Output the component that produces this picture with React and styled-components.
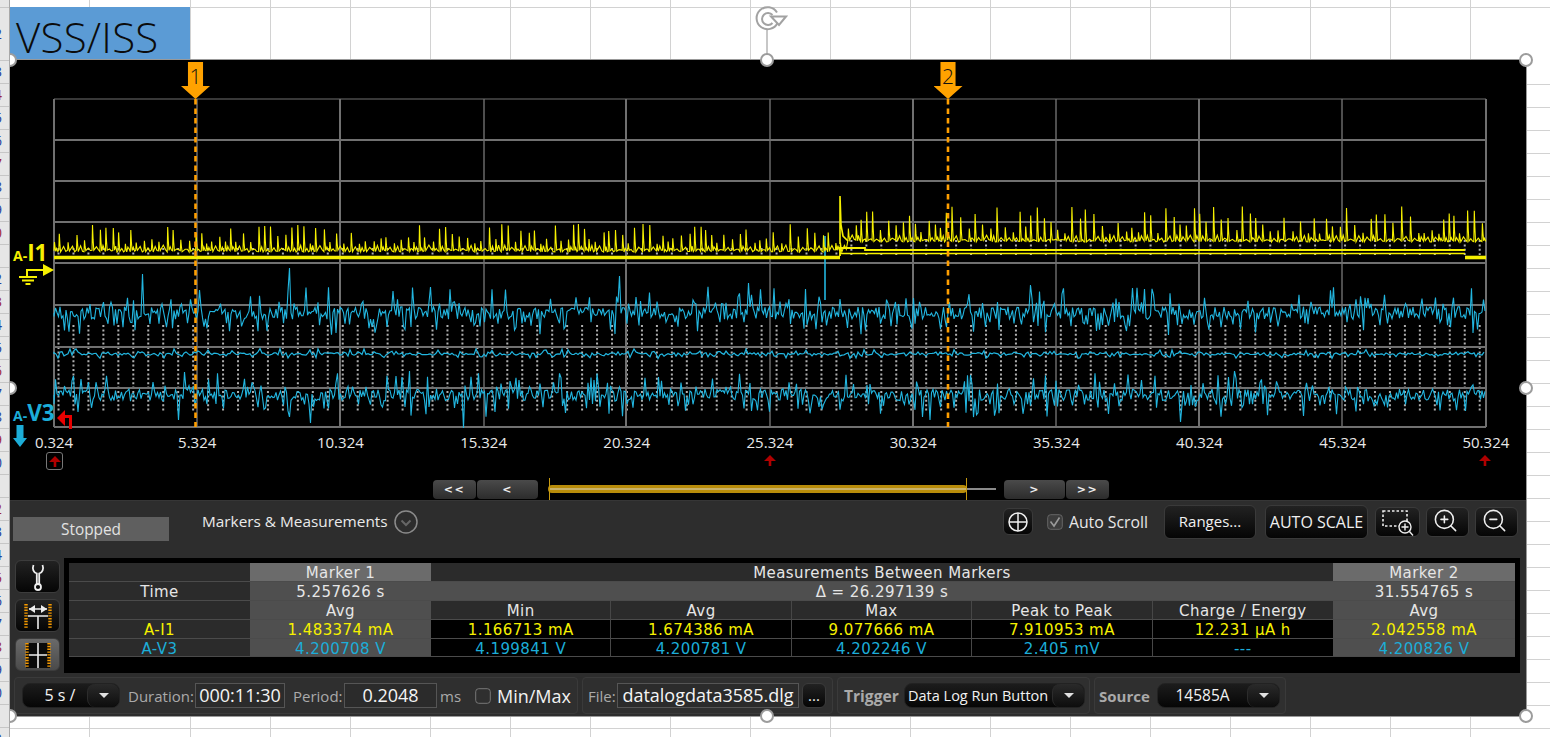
import React, { useMemo } from "react";
import styled, { createGlobalStyle } from "styled-components";
import { ZoomIn, ZoomOut } from "lucide-react";

const Global = createGlobalStyle`
  html, body { margin: 0; padding: 0; background: #fff; overflow: hidden; }
  #root { width: 1550px; height: 737px; overflow: hidden; }
  * { box-sizing: border-box; }
`;

const UI = `"Open Sans", "Noto Sans", sans-serif`;
const WIDE = `"DejaVu Sans", "Open Sans", sans-serif`;
const YEL = "#f6f000";
const BLU = "#1cadd8";
const TRACE_BLU = "#22b6e0";

const Page = styled.div`
  display: flex;
  width: 1550px;
  height: 737px;
  overflow: hidden;
  font-family: ${UI};
`;
const RowHeader = styled.div`
  position: relative;
  z-index: 5;
  flex: 0 0 10px;
  background: #e6e6e6;
  border-right: 1px solid #a8a8a8;
  display: flex;
  flex-direction: column;
  overflow: hidden;
`;
const RowNum = styled.div`
  flex: 0 0 ${(p) => p.$h}px;
  border-bottom: 1px solid #c6c6c6;
  display: flex;
  justify-content: flex-end;
  align-items: center;
  padding-right: 7px;
  font: 14px/1 ${UI};
  color: ${(p) => p.$c};
  white-space: nowrap;
  overflow: hidden;
`;
const Sheet = styled.div`
  position: relative;
  flex: 1;
  padding-top: 7px;
  background-color: #fff;
  background-image:
    linear-gradient(#d2d2d2, #d2d2d2),
    linear-gradient(#d2d2d2, #d2d2d2),
    repeating-linear-gradient(90deg, #d2d2d2 0 1px, transparent 1px 80px),
    repeating-linear-gradient(180deg, #d2d2d2 0 1px, transparent 1px 23px);
  background-size: 100% 1px, 1px 100%, 100% 100%, 100% 100%;
  background-position: 0 7px, 79px 0, 180px 0, 0 84px;
  background-repeat: no-repeat;
`;
const TitleCell = styled.div`
  width: 180px;
  height: 53px;
  background: #5b9bd5;
  color: #0c0c0c;
  font: 300 42px/60px ${UI};
  letter-spacing: 0.25px;
  padding-left: 6px;
  overflow: hidden;
`;
const PictureFrame = styled.div`
  position: relative;
  width: 1516px;
  height: 656px;
  display: flex;
  flex-direction: column;
  box-shadow: 0 0 0 1px #999;
`;
const Handle = styled.span`
  position: absolute;
  left: ${(p) => p.$x}px;
  top: ${(p) => p.$y}px;
  width: 14px;
  height: 14px;
  margin: -7px 0 0 -7px;
  border-radius: 50%;
  background: #fff;
  border: 2.5px solid #9c9c9c;
  z-index: 4;
`;
const RotateGlyph = styled.svg`
  position: absolute;
  left: 742px;
  top: -56px;
  width: 36px;
  height: 52px;
`;

/* scope */
const ScopeArea = styled.section`
  position: relative;
  height: 440px;
  background: #000;
  display: flex;
  flex-direction: column;
  overflow: hidden;
`;
const PlotSvg = styled.svg`
  display: block;
  margin: 38px 0 0 43px;
  width: 1435px;
  height: 331px;
  flex: none;
`;
const Flag = styled.div`
  position: absolute;
  left: ${(p) => p.$x - 14.5}px;
  top: 2px;
  width: 29px;
  height: 37px;
  background: #ffa200;
  clip-path: polygon(24% 0, 76% 0, 76% 65%, 100% 65%, 50% 100%, 0 65%, 24% 65%);
  color: #111;
  font: 300 21px/28px ${UI};
  text-align: center;
`;
const ChannelLabel = styled.div`
  position: absolute;
  left: 3px;
  top: ${(p) => p.$y}px;
  color: ${(p) => p.$c};
  font: 700 14px/20px ${UI};
  white-space: nowrap;
`;
const ChannelBig = styled.span`
  font-size: 22.5px;
`;
const ChannelGlyph = styled.svg`
  position: absolute;
  left: ${(p) => p.$x}px;
  top: ${(p) => p.$y}px;
`;
const AxisRow = styled.div`
  display: flex;
  justify-content: space-between;
  width: 1472px;
  margin: 3px 0 0 24px;
  height: 20px;
  flex: none;
`;
const AxisLabel = styled.span`
  width: 40px;
  display: flex;
  justify-content: center;
  white-space: nowrap;
  color: #e8e8e8;
  font: 15px/20px ${UI};
`;
const TickRow = styled.div`
  position: relative;
  height: 18px;
  flex: none;
`;
const RedTick = styled.svg`
  position: absolute;
  left: ${(p) => p.$x - 6}px;
  top: 3px;
`;
const TickBox = styled.div`
  position: absolute;
  left: 36px;
  top: 0;
  width: 17px;
  height: 18px;
  border: 1.5px solid #777;
  border-radius: 3px;
  display: flex;
  align-items: center;
  justify-content: center;
`;
const SliderRow = styled.div`
  display: flex;
  align-items: center;
  height: 22px;
  margin-top: 8px;
  padding-left: 422px;
  flex: none;
`;
const StepBtn = styled.div`
  width: ${(p) => p.$w}px;
  height: 19px;
  margin-left: ${(p) => p.$ml || 1}px;
  border-radius: 4px;
  background: linear-gradient(#4a4a4a, #2c2c2c);
  color: #eee;
  font: 700 11px/19px ${WIDE};
  letter-spacing: 1.5px;
  text-align: center;
`;
const SliderTrack = styled.div`
  position: relative;
  margin-left: 10px;
  width: 448px;
  height: 22px;
  flex: none;
`;
const SliderTail = styled.div`
  position: absolute;
  left: 415px;
  right: 0;
  top: 10px;
  height: 2px;
  background: #8a8a8a;
`;
const SliderFill = styled.div`
  position: absolute;
  left: 0;
  width: 419px;
  top: 7px;
  height: 8px;
  border-radius: 4px;
  background: #b88c0a;
  &::after {
    content: "";
    position: absolute;
    left: 1px;
    right: 1px;
    top: 3px;
    height: 2px;
    background: #c9b26a;
  }
`;
const SliderEdge = styled.div`
  position: absolute;
  left: ${(p) => p.$x}px;
  top: 0;
  width: 1px;
  height: 22px;
  background: #c79a10;
`;

/* panel */
const Panel = styled.section`
  flex: 1;
  background: #2d2d2d;
  border-top: 1px solid #363636;
  display: flex;
  flex-direction: column;
`;
const Toolbar = styled.div`
  display: flex;
  align-items: center;
  height: 57px;
  padding: 0 8px 16px 3px;
  flex: none;
`;
const Stopped = styled.div`
  margin-top: 14px;
  width: 156px;
  height: 24px;
  background: #5f5f5f;
  color: #e2e2e2;
  font: 15.4px/25px ${UI};
  text-align: center;
`;
const SectionTitle = styled.div`
  margin: -2px 0 0 33px;
  color: #eaeaea;
  font: 500 15.35px/20px ${UI};
  white-space: nowrap;
`;
const ChevronCircle = styled.svg`
  margin-left: 6px;
  flex: none;
`;
const Spacer = styled.div`
  flex: 1;
`;
const DarkBtn = styled.div`
  display: flex;
  align-items: center;
  justify-content: center;
  flex: none;
  width: ${(p) => p.$w}px;
  height: ${(p) => p.$h || 34}px;
  margin-left: ${(p) => p.$ml || 0}px;
  border-radius: 6px;
  border: 1px solid #3a3a3a;
  background: linear-gradient(#222, #050505);
  color: #f0f0f0;
  font: ${(p) => p.$fs || 15}px/1 ${UI};
  white-space: nowrap;
`;
const GlassIn = styled(ZoomIn)`
  margin: -3px 5px 0 0;
`;
const GlassOut = styled(ZoomOut)`
  margin: -3px 5px 0 0;
`;
const CheckGlyph = styled.svg`
  flex: none;
  margin-left: ${(p) => p.$ml || 0}px;
`;
const CheckText = styled.span`
  margin-left: ${(p) => p.$ml}px;
  color: ${(p) => p.$c || "#e8e8e8"};
  font: ${(p) => p.$f || "15.8px/20px"} ${UI};
  white-space: nowrap;
`;
const MidRow = styled.div`
  display: flex;
  height: 115px;
  padding-left: 5px;
  flex: none;
`;
const ToolColumn = styled.div`
  width: 45px;
  padding-top: 2px;
  display: flex;
  flex-direction: column;
  gap: 6px;
`;
const ToolBtn = styled.div`
  height: 33px;
  border-radius: 6px;
  border: 1px solid #3c3c3c;
  background: ${(p) => (p.$on ? "linear-gradient(#6a6a6a, #4a4a4a)" : "linear-gradient(#222, #050505)")};
  display: flex;
  align-items: center;
  justify-content: center;
`;
const TableWell = styled.div`
  margin-left: 4px;
  width: 1456px;
  height: 115px;
  background: #000;
  padding: 5px;
`;
const MeasureGrid = styled.div`
  display: grid;
  grid-template-columns: 181px 181px repeat(5, 180.4px) 182px;
  grid-auto-rows: 18.9px;
`;
const TONES = { plain: "#2b2b2b", title: "#6b6b6b", sub: "#4f4f4f", data: "#000" };
const Cell = styled.div`
  grid-column: span ${(p) => p.$span || 1};
  background: ${(p) => TONES[p.$tone || "plain"]};
  color: ${(p) => p.$c || "#e6e6e6"};
  border-bottom: 1px solid #4b4b4b;
  border-right: ${(p) => (p.$div ? "1px solid #474747" : "0")};
  font: 15px/21px ${WIDE};
  letter-spacing: 0.43px;
  text-align: center;
  white-space: nowrap;
  overflow: hidden;
`;
const StatusRow = styled.div`
  display: flex;
  gap: 4px;
  margin-top: 4px;
  padding-left: 4px;
  flex: none;
`;
const Group = styled.div`
  display: flex;
  align-items: center;
  width: ${(p) => p.$w}px;
  height: 37px;
  padding-left: ${(p) => p.$pl || 5}px;
  border: 1px solid #3a3a3a;
  border-radius: 4px;
  background: #2f2f2f;
`;
const Drop = styled.div`
  display: flex;
  flex: none;
  width: ${(p) => p.$w}px;
  height: 25px;
  margin-left: ${(p) => p.$ml || 0}px;
  border-radius: 8px;
  border: 1px solid #222;
  background: linear-gradient(#1c1c1c, #060606);
  color: #f2f2f2;
`;
const DropText = styled.div`
  flex: 1;
  font: ${(p) => p.$f || "15px"}/23px ${UI};
  text-align: ${(p) => p.$a || "center"};
  padding-left: ${(p) => p.$pl || 0}px;
  white-space: nowrap;
`;
const DropArrow = styled.div`
  flex: 0 0 32px;
  border-left: 1px solid #2c2c2c;
  border-radius: 8px;
  background: linear-gradient(#2a2a2a, #0d0d0d);
  display: flex;
  align-items: center;
  justify-content: center;
  &::after {
    content: "";
    border: 5px solid transparent;
    border-top: 5px solid #e0e0e0;
    border-bottom: 0;
  }
`;
const Label = styled.span`
  flex: none;
  width: ${(p) => p.$w}px;
  margin-left: ${(p) => p.$ml || 0}px;
  color: #aaa;
  font: ${(p) => (p.$b ? 700 : 400)} ${(p) => p.$s || 15}px/20px ${UI};
  white-space: nowrap;
`;
const Field = styled.div`
  flex: none;
  width: ${(p) => p.$w}px;
  height: 25px;
  margin-left: ${(p) => p.$ml || 0}px;
  border: 1px solid #555;
  background: #2b2b2b;
  color: #f4f4f4;
  font: 18px/23px ${UI};
  text-align: center;
  white-space: nowrap;
  overflow: hidden;
`;

function rng(seed) {
  let a = seed >>> 0;
  return () => {
    a = (a + 0x6d2b79f5) | 0;
    let t = Math.imul(a ^ (a >>> 15), 1 | a);
    t = (t + Math.imul(t ^ (t >>> 7), 61 | t)) ^ t;
    return ((t ^ (t >>> 14)) >>> 0) / 4294967296;
  };
}

function yellowTrace() {
  const r = rng(23);
  let d = "M54 250";
  let x = 54;
  while (x < 1486) {
    const after = x > 842;
    const base = after ? 242 : 252;
    const h = after ? 8 + Math.pow(r(), 1.4) * 28 : 8 + r() * 20;
    const gap = 4.5 + r() * 4.5;
    d += ` L${x.toFixed(1)} ${(base - r() * 2).toFixed(1)}`;
    d += ` L${(x + 0.5).toFixed(1)} ${(base - h).toFixed(1)}`;
    d += ` L${(x + 1.1).toFixed(1)} ${(base - h * 0.45).toFixed(1)}`;
    d += ` L${(x + 1.8).toFixed(1)} ${(base - r() * 2).toFixed(1)}`;
    d += ` L${(x + gap * 0.55).toFixed(1)} ${(base - 2 - r() * 5).toFixed(1)}`;
    d += ` L${(x + gap * 0.8).toFixed(1)} ${(base - r() * 3).toFixed(1)}`;
    x += gap;
  }
  return d;
}

function blueTrace(seed, center, up, down, step, spikes) {
  const r = rng(seed);
  let d = `M54 ${center}`;
  for (let x = 54; x < 1486; x += step) {
    const s = spikes.find((k) => Math.abs(k[0] - x) <= step / 2);
    let y;
    if (s) y = s[1];
    else {
      const v = r();
      if (v > 0.88) y = center - up * (1 + Math.pow(r(), 2) * 2);
      else if (v < 0.12) y = center + down * (1 + Math.pow(r(), 2) * 1.5);
      else y = center + (r() - 0.5) * 2 * (r() > 0.5 ? up : down) * 0.7;
    }
    d += ` L${x.toFixed(1)} ${y.toFixed(1)}`;
  }
  return d;
}

const H_LINES = [99, 140, 181, 222, 263, 305, 347, 388, 427];
const V_LINES = [54, 197, 340, 484, 626, 770, 913, 1056, 1199, 1342, 1486];

function Plot() {
  const t = useMemo(
    () => ({
      yellow: yellowTrace(),
      b1: blueTrace(5, 313, 9, 9, 1.5, [[143, 274], [290, 268], [620, 276], [748, 283], [1030, 285]]),
      b2: blueTrace(6, 354, 1.8, 1.8, 2, []),
      b3: blueTrace(7, 395, 8, 9, 1.5, [[463, 428], [310, 423], [178, 420], [1180, 422], [930, 420]]),
      dots: Array.from({ length: 96 }, (_, i) => 58.5 + i * 14.96),
    }),
    []
  );
  return (
    <PlotSvg viewBox="53 98 1435 331" aria-hidden="true">
      {t.dots.map((x) => (
        <g key={x} stroke="#b0b0b0" strokeWidth="2" strokeDasharray="2 2.4">
          <line x1={x} x2={x} y1={325} y2={412} />
          <line x1={x} x2={x} y1={x > 838 ? 240 : 248} y2={255} />
        </g>
      ))}
      {H_LINES.map((y, i) => (
        <line key={y} x1="54" x2="1486" y1={y} y2={y} stroke="#707070" strokeWidth={i === 0 ? 1.2 : 2} />
      ))}
      {V_LINES.map((x, i) => (
        <line key={x} x1={x} x2={x} y1="99" y2="427" stroke="#707070" strokeWidth={i % 2 ? 1.4 : 2} />
      ))}
      <path d={t.b1} fill="none" stroke={TRACE_BLU} strokeWidth="1.1" />
      <path d={t.b2} fill="none" stroke={TRACE_BLU} strokeWidth="1.2" />
      <path d={t.b3} fill="none" stroke={TRACE_BLU} strokeWidth="1.1" />
      <path d="M825 236V300" stroke={TRACE_BLU} strokeWidth="1.6" />
      <path d={t.yellow} fill="none" stroke={YEL} strokeWidth="1.1" />
      <path d="M840 244V196L841 225 843 236 848 241" fill="none" stroke={YEL} strokeWidth="1.6" />
      <path d="M54 257.5H840" stroke={YEL} strokeWidth="3.6" />
      <path d="M840 256V248H865V250H1465" fill="none" stroke={YEL} strokeWidth="1.8" />
      <path d="M840 253.5H1465" stroke={YEL} strokeWidth="1.5" />
      <path d="M1465 257.5H1486" stroke={YEL} strokeWidth="3.6" />
      <line x1="195.5" x2="195.5" y1="99" y2="427" stroke="#ff9f00" strokeWidth="2.6" strokeDasharray="5.5 4" />
      <line x1="948" x2="948" y1="99" y2="427" stroke="#ff9f00" strokeWidth="2.6" strokeDasharray="5.5 4" />
    </PlotSvg>
  );
}

const RedArrow = ({ x, as: As = RedTick }) => (
  <As $x={x} width="12" height="11" viewBox="0 0 12 11">
    <path d="M6 0 12 6H7.3V11H4.7V6H0Z" fill="#b00000" />
  </As>
);
const PlainSvg = styled.svg``;

const TABLE = [
  [{ t: "" }, { t: "Marker 1", tone: "title" }, { t: "Measurements Between Markers", span: 5 }, { t: "Marker 2", tone: "title" }],
  [{ t: "Time" }, { t: "5.257626 s", tone: "sub" }, { t: "Δ = 26.297139 s", span: 5, tone: "sub" }, { t: "31.554765 s", tone: "sub" }],
  [
    { t: "" }, { t: "Avg", tone: "sub" }, { t: "Min", div: 1 }, { t: "Avg", div: 1 }, { t: "Max", div: 1 },
    { t: "Peak to Peak", div: 1 }, { t: "Charge / Energy" }, { t: "Avg", tone: "sub" },
  ],
  [
    { t: "A-I1", c: YEL }, { t: "1.483374 mA", tone: "sub", c: YEL },
    { t: "1.166713 mA", tone: "data", c: YEL, div: 1 }, { t: "1.674386 mA", tone: "data", c: YEL, div: 1 },
    { t: "9.077666 mA", tone: "data", c: YEL, div: 1 }, { t: "7.910953 mA", tone: "data", c: YEL, div: 1 },
    { t: "12.231 µA h", tone: "data", c: YEL }, { t: "2.042558 mA", tone: "sub", c: YEL },
  ],
  [
    { t: "A-V3", c: BLU }, { t: "4.200708 V", tone: "sub", c: BLU },
    { t: "4.199841 V", tone: "data", c: BLU, div: 1 }, { t: "4.200781 V", tone: "data", c: BLU, div: 1 },
    { t: "4.202246 V", tone: "data", c: BLU, div: 1 }, { t: "2.405 mV", tone: "data", c: BLU, div: 1 },
    { t: "---", tone: "data", c: BLU }, { t: "4.200826 V", tone: "sub", c: BLU },
  ],
];

const AXIS = ["0.324", "5.324", "10.324", "15.324", "20.324", "25.324", "30.324", "35.324", "40.324", "45.324", "50.324"];

const ROWS = [
  [8, ""], [53, "2"], [23, "3"],
  ...Array.from({ length: 29 }, (_, i) => [23, String(i + 4)]),
];

const HANDLES = [
  [0, 0], [757, 0], [1516, 0], [0, 328], [1516, 328], [0, 656], [757, 656], [1516, 656],
];

const DottedEdge = ({ x, y1 = 6, y2 = 28 }) => (
  <line x1={x} x2={x} y1={y1} y2={y2} stroke="#f59a00" strokeWidth="3.4" strokeDasharray="1.4 1.4" />
);

export default function App() {
  return (
    <Page>
      <Global />
      <RowHeader>
        {ROWS.map(([h, n], i) => (
          <RowNum key={i} $h={h} $c={i % 3 === 0 ? "#9c1f3c" : "#1f3f9c"}>{n}</RowNum>
        ))}
      </RowHeader>
      <Sheet>
        <TitleCell>VSS/ISS</TitleCell>
        <PictureFrame>
          <RotateGlyph viewBox="0 0 36 52" aria-hidden="true">
            <path d="M25 8.5A11 11 0 1 0 25.5 19" fill="none" stroke="#a2a2a2" strokeWidth="2" />
            <path d="M20.500 11A6 6 0 1 0 20.500 19" fill="none" stroke="#a2a2a2" strokeWidth="2" />
            <path d="M19 12.500H34L27 21Z" fill="#fff" stroke="#a2a2a2" strokeWidth="2" />
            <line x1="15" x2="15" y1="25" y2="52" stroke="#a2a2a2" strokeWidth="1.2" />
          </RotateGlyph>
          <ScopeArea>
            <Plot />
            <Flag $x={185.5}>1</Flag>
            <Flag $x={938}>2</Flag>
            <ChannelLabel $y={183} $c={YEL}>A-<ChannelBig>I1</ChannelBig></ChannelLabel>
            <ChannelGlyph $x={9} $y={204} width="36" height="22" viewBox="0 0 36 22">
              <path d="M1 13H8V6H26" fill="none" stroke={YEL} strokeWidth="2" />
              <path d="M24 0 35 6 24 12Z" fill={YEL} />
              <path d="M0 13H18M3 16.500H15M6.500 20H11.500" stroke={YEL} strokeWidth="2" />
            </ChannelGlyph>
            <ChannelLabel $y={343} $c={BLU}>A-<ChannelBig>V3</ChannelBig></ChannelLabel>
            <ChannelGlyph $x={47} $y={350} width="16" height="19" viewBox="0 0 16 19">
              <path d="M0 8 8 0V5H15V19H12V8H8V16Z" fill="#e80000" />
            </ChannelGlyph>
            <ChannelGlyph $x={3} $y={365} width="14" height="22" viewBox="0 0 14 22">
              <path d="M3.500 0H10.500V13H14L7 22 0 13H3.500Z" fill={BLU} />
            </ChannelGlyph>
            <AxisRow>
              {AXIS.map((a) => <AxisLabel key={a}>{a}</AxisLabel>)}
            </AxisRow>
            <TickRow>
              <TickBox><RedArrow x={0} as={PlainSvg} /></TickBox>
              <RedArrow x={760} />
              <RedArrow x={1475} />
            </TickRow>
            <SliderRow>
              <StepBtn $w={43} $ml={1}>{"<<"}</StepBtn>
              <StepBtn $w={61}>{"<"}</StepBtn>
              <SliderTrack>
                <SliderTail />
                <SliderFill />
                <SliderEdge $x={1} />
                <SliderEdge $x={418} />
              </SliderTrack>
              <StepBtn $w={61} $ml={8}>{">"}</StepBtn>
              <StepBtn $w={43}>{">>"}</StepBtn>
            </SliderRow>
          </ScopeArea>
          <Panel>
            <Toolbar>
              <Stopped>Stopped</Stopped>
              <SectionTitle>Markers &amp; Measurements</SectionTitle>
              <ChevronCircle width="24" height="24" viewBox="0 0 24 24" aria-hidden="true">
                <circle cx="12" cy="12" r="11" fill="none" stroke="#8a8a8a" strokeWidth="1.5" />
                <path d="M7.500 10.500 12 15 16.500 10.500" fill="none" stroke="#666" strokeWidth="2" />
              </ChevronCircle>
              <Spacer />
              <DarkBtn $w={30} $h={27}>
                <svg width="22" height="22" viewBox="0 0 22 22">
                  <circle cx="11" cy="11" r="9" fill="none" stroke="#eee" strokeWidth="1.5" />
                  <path d="M11 2V20M2 11H20" stroke="#eee" strokeWidth="1.5" />
                </svg>
              </DarkBtn>
              <CheckGlyph $ml={14} width="16" height="16" viewBox="0 0 16 16">
                <rect x=".7" y=".7" width="14.600" height="14.600" rx="3" fill="#3c3c3c" stroke="#666" />
                <path d="M3.500 7.500 7 12 12.500 3.500" fill="none" stroke="#9a9a9a" strokeWidth="1.6" />
              </CheckGlyph>
              <CheckText $ml={6}>Auto Scroll</CheckText>
              <DarkBtn $w={92} $ml={16}>Ranges...</DarkBtn>
              <DarkBtn $w={103} $ml={9} $fs={16}>AUTO SCALE</DarkBtn>
              <DarkBtn $w={45} $h={30} $ml={7}>
                <svg width="36" height="30" viewBox="0 0 36 30">
                  <rect x="3" y="4" width="24" height="15" fill="none" stroke="#eee" strokeWidth="1.6" strokeDasharray="2.500 2" />
                  <circle cx="25" cy="20" r="6" fill="#0c0c0c" stroke="#eee" strokeWidth="1.4" />
                  <path d="M25 16.500V23.500M21.500 20H28.500M29.500 24.500 33 28.500" stroke="#eee" strokeWidth="1.4" />
                </svg>
              </DarkBtn>
              <DarkBtn $w={43} $h={30} $ml={6}><GlassIn size={27} color="#eee" strokeWidth={1.4} /></DarkBtn>
              <DarkBtn $w={43} $h={30} $ml={6}><GlassOut size={27} color="#eee" strokeWidth={1.4} /></DarkBtn>
            </Toolbar>
            <MidRow>
              <ToolColumn>
                <ToolBtn>
                  <svg width="20" height="30" viewBox="0 0 20 30">
                    <path d="M5.500 3C4 7 5.500 10.500 8.800 11.500V22M14.500 3C16 7 14.500 10.500 11.200 11.500V22" fill="none" stroke="#eee" strokeWidth="1.8" />
                    <circle cx="10" cy="25" r="3" fill="none" stroke="#eee" strokeWidth="1.8" />
                  </svg>
                </ToolBtn>
                <ToolBtn>
                  <svg width="36" height="30" viewBox="0 0 36 30">
                    <DottedEdge x={6} y1={3} y2={28} />
                    <DottedEdge x={30} y1={3} y2={28} />
                    <path d="M8 15H28M18 15V28M9 8H27" stroke="#eee" strokeWidth="1.6" />
                    <path d="M15 4 9 8 15 12ZM21 4 27 8 21 12Z" fill="#eee" />
                  </svg>
                </ToolBtn>
                <ToolBtn $on>
                  <svg width="36" height="30" viewBox="0 0 36 30">
                    <rect x="6" y="3" width="24" height="25" fill="#0a0a0a" />
                    <DottedEdge x={7} y1={3} y2={28} />
                    <DottedEdge x={29} y1={3} y2={28} />
                    <path d="M9 15H27M18 3V28" stroke="#eee" strokeWidth="1.6" />
                  </svg>
                </ToolBtn>
              </ToolColumn>
              <TableWell>
                <MeasureGrid>
                  {TABLE.flat().map((c, i) => (
                    <Cell key={i} $span={c.span} $tone={c.tone} $c={c.c} $div={c.div}>{c.t}</Cell>
                  ))}
                </MeasureGrid>
              </TableWell>
            </MidRow>
            <StatusRow>
              <Group $w={564} $pl={7}>
                <Drop $w={98}><DropText $f="16px" $pl={10}>5 s /</DropText><DropArrow /></Drop>
                <Label $w={67} $ml={8}>Duration:</Label>
                <Field $w={90}>000:11:30</Field>
                <Label $w={49} $ml={8}>Period:</Label>
                <Field $w={93} $ml={2}>0.2048</Field>
                <Label $w={20} $ml={3}>ms</Label>
                <CheckGlyph $ml={15} width="16" height="16" viewBox="0 0 16 16">
                  <rect x=".7" y=".7" width="14.600" height="14.600" rx="3" fill="none" stroke="#777" />
                </CheckGlyph>
                <CheckText $ml={6} $c="#f2f2f2" $f="18px/24px">Min/Max</CheckText>
              </Group>
              <Group $w={251} $pl={5}>
                <Label $w={29}>File:</Label>
                <Field $w={182}>datalogdata3585.dlg</Field>
                <DarkBtn $w={24} $h={25} $ml={3}>...</DarkBtn>
              </Group>
              <Group $w={253} $pl={6}>
                <Label $w={60} $b $s={15.6}>Trigger</Label>
                <Drop $w={181}><DropText $f="14.5px" $a="left" $pl={3}>Data Log Run Button</DropText><DropArrow /></Drop>
              </Group>
              <Group $w={192} $pl={4}>
                <Label $w={58} $b>Source</Label>
                <Drop $w={123}><DropText $f="15.5px">14585A</DropText><DropArrow /></Drop>
              </Group>
            </StatusRow>
          </Panel>
          {HANDLES.map(([x, y]) => <Handle key={`${x}-${y}`} $x={x} $y={y} />)}
        </PictureFrame>
      </Sheet>
    </Page>
  );
}
